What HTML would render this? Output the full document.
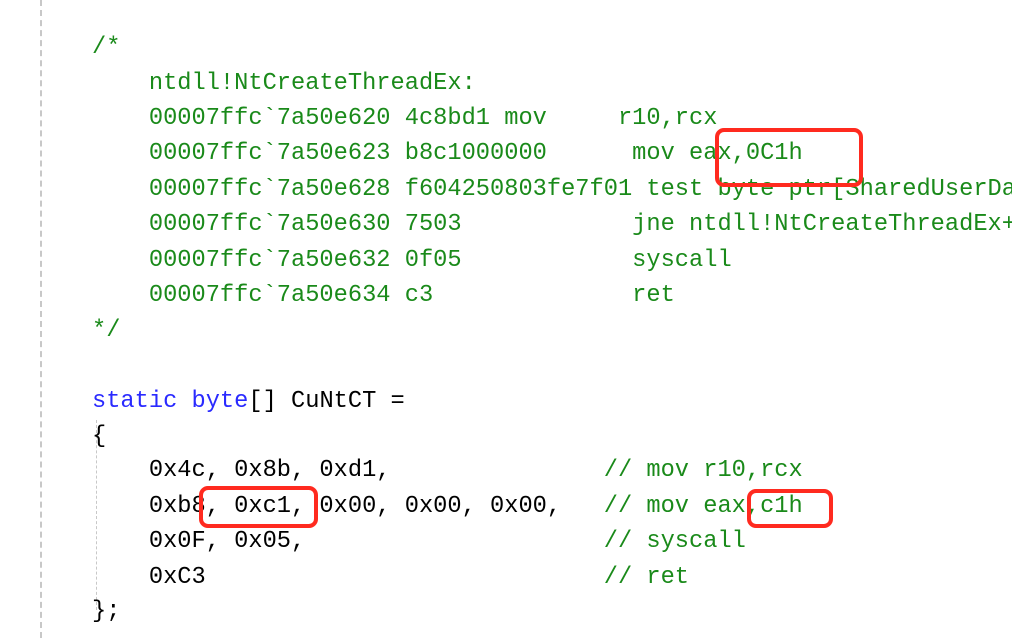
<!DOCTYPE html>
<html><head><meta charset="utf-8"><style>
html,body{margin:0;padding:0;background:#fff;width:1012px;height:638px;overflow:hidden;position:relative}
.l{position:absolute;left:92px;white-space:pre;font-family:"Liberation Mono",monospace;font-size:23.7px;line-height:35px;color:#000;height:35px}
.g{color:#1a8a1a}
.b{color:#2a2aff}
.vd{position:absolute;border-left:2px dashed #c8c8c8}
.box{position:absolute;border:4px solid #ff2a1f;border-radius:9px;box-sizing:border-box}
</style></head><body>
<div class="vd" style="left:40px;top:0;height:638px"></div>
<div class="vd" style="left:96px;top:420px;height:190px;border-left-width:1px"></div>
<div class="l g" style="top:30px">/*</div>
<div class="l g" style="top:66px">    ntdll!NtCreateThreadEx:</div>
<div class="l g" style="top:101px">    00007ffc`7a50e620 4c8bd1 mov     r10,rcx</div>
<div class="l g" style="top:136px">    00007ffc`7a50e623 b8c1000000      mov eax,0C1h</div>
<div class="l g" style="top:172px">    00007ffc`7a50e628 f604250803fe7f01 test byte ptr[SharedUserData</div>
<div class="l g" style="top:207px">    00007ffc`7a50e630 7503            jne ntdll!NtCreateThreadEx+</div>
<div class="l g" style="top:243px">    00007ffc`7a50e632 0f05            syscall</div>
<div class="l g" style="top:278px">    00007ffc`7a50e634 c3              ret</div>
<div class="l g" style="top:313px">*/</div>
<div class="l" style="top:384px"><span class="b">static byte</span>[] CuNtCT =</div>
<div class="l" style="top:419px">{</div>
<div class="l" style="top:453px">    0x4c, 0x8b, 0xd1,               <span class="g">// mov r10,rcx</span></div>
<div class="l" style="top:489px">    0xb8, 0xc1, 0x00, 0x00, 0x00,   <span class="g">// mov eax,c1h</span></div>
<div class="l" style="top:524px">    0x0F, 0x05,                     <span class="g">// syscall</span></div>
<div class="l" style="top:560px">    0xC3                            <span class="g">// ret</span></div>
<div class="l" style="top:594px">};</div>
<div class="box" style="left:715px;top:128px;width:148px;height:59px"></div>
<div class="box" style="left:199px;top:486px;width:119px;height:42px"></div>
<div class="box" style="left:747px;top:489px;width:86px;height:39px"></div>
</body></html>
